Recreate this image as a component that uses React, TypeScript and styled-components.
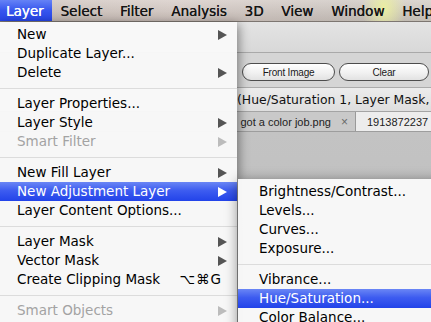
import React from "react";
import styled, { createGlobalStyle, css } from "styled-components";

type Entry =
  | { kind: "sep" }
  | { kind: "item"; label: string; sub?: boolean; disabled?: boolean; active?: boolean; keys?: string };

const layerMenu: Entry[] = [
  { kind: "item", label: "New", sub: true },
  { kind: "item", label: "Duplicate Layer..." },
  { kind: "item", label: "Delete", sub: true },
  { kind: "sep" },
  { kind: "item", label: "Layer Properties..." },
  { kind: "item", label: "Layer Style", sub: true },
  { kind: "item", label: "Smart Filter", sub: true, disabled: true },
  { kind: "sep" },
  { kind: "item", label: "New Fill Layer", sub: true },
  { kind: "item", label: "New Adjustment Layer", sub: true, active: true },
  { kind: "item", label: "Layer Content Options..." },
  { kind: "sep" },
  { kind: "item", label: "Layer Mask", sub: true },
  { kind: "item", label: "Vector Mask", sub: true },
  { kind: "item", label: "Create Clipping Mask", keys: "⌥⌘G" },
  { kind: "sep" },
  { kind: "item", label: "Smart Objects", sub: true, disabled: true },
];

const adjustMenu: Entry[] = [
  { kind: "item", label: "Brightness/Contrast..." },
  { kind: "item", label: "Levels..." },
  { kind: "item", label: "Curves..." },
  { kind: "item", label: "Exposure..." },
  { kind: "sep" },
  { kind: "item", label: "Vibrance..." },
  { kind: "item", label: "Hue/Saturation...", active: true },
  { kind: "item", label: "Color Balance..." },
];

const barTitles = ["Layer", "Select", "Filter", "Analysis", "3D", "View", "Window", "Help"];

const GlobalStyle = createGlobalStyle`
  html, body {
    margin: 0;
    padding: 0;
    overflow: hidden;
    background: #c0c0c0;
  }
  body {
    font-family: "DejaVu Sans", "Noto Sans", sans-serif;
  }
`;

const Screen = styled.div`
  width: 431px;
  height: 322px;
  display: flex;
  flex-direction: column;
  overflow: hidden;
`;

const MenuBar = styled.div`
  flex: none;
  height: 21px;
  display: flex;
  white-space: nowrap;
  border-bottom: 1px solid #7d7671;
  background:
    radial-gradient(ellipse 22px 30px at 384px 8px, rgba(236, 240, 160, 0.95), rgba(236, 240, 160, 0) 100%),
    linear-gradient(180deg, rgba(255, 255, 255, 0.28), rgba(0, 0, 0, 0.06)),
    linear-gradient(90deg, #c7bbb3 0%, #d2c6c0 40%, #cdc3bd 62%, #c9c1bb 80%, #cfc9bf 100%);
`;

const BarTitle = styled.div<{ $open?: boolean }>`
  padding: 1px 8.9px 0;
  line-height: 20px;
  font-size: 13.5px;
  color: #151515;
  text-shadow: 0.25px 0 0 currentColor;

  &:first-child {
    padding-left: 6px;
    padding-right: 8px;
  }

  ${(p) =>
    p.$open &&
    css`
      color: #fff;
      background: linear-gradient(180deg, #6582f6 0%, #3656ee 50%, #2645e8 100%);
    `}
`;

const Workspace = styled.div`
  position: relative;
  flex: 1;
  display: flex;
  flex-direction: column;
  background: #bfbfbf;
`;

const TopStrip = styled.div`
  height: 30px;
  background: linear-gradient(180deg, #e4e4e4, #d8d8d8);
  border-bottom: 1px solid #a9a9a9;
`;

const ButtonBar = styled.div`
  height: 35px;
  display: flex;
  align-items: flex-start;
  gap: 4px;
  padding: 10px 0 0 242px;
  box-sizing: border-box;
  background: #d5d5d5;
  border-bottom: 1px solid #ababab;
`;

const PillButton = styled.button<{ $w: number }>`
  width: ${(p) => p.$w}px;
  height: 18px;
  flex: none;
  padding: 0;
  border: 1px solid #4d4d4d;
  border-radius: 9px;
  background: linear-gradient(180deg, #ffffff 0%, #f1f1f1 55%, #e2e2e2 100%);
  font-family: "Liberation Sans", Arial, sans-serif;
  font-size: 10px;
  letter-spacing: -0.2px;
  color: #1a1a1a;
`;

const TitleRow = styled.div`
  height: 23px;
  padding-left: 237px;
  line-height: 24px;
  font-size: 12.4px;
  white-space: nowrap;
  overflow: hidden;
  color: #111;
  background: linear-gradient(180deg, #ececec, #dedede);
  border-bottom: 1px solid #a4a4a4;
`;

const TabRow = styled.div`
  height: 19px;
  display: flex;
  font-family: "Liberation Sans", Arial, sans-serif;
  font-size: 11px;
  white-space: nowrap;
  border-bottom: 1px solid #9d9d9d;
`;

const Tab = styled.div<{ $current?: boolean }>`
  display: flex;
  align-items: center;
  gap: 10px;
  box-sizing: border-box;
  color: #222;
  ${(p) =>
    p.$current
      ? css`
          flex: 1;
          min-width: 0;
          overflow: hidden;
          padding-left: 11px;
          background: #ededed;
        `
      : css`
          flex: none;
          width: 356px;
          justify-content: flex-end;
          padding-right: 7px;
          background: #c9c9c9;
          border-right: 1px solid #9a9a9a;
        `}
`;

const CloseMark = styled.span`
  color: #6a6a6a;
  font-size: 12px;
`;

const Canvas = styled.div`
  flex: 1;
  background: linear-gradient(180deg, #c3c3c3, #bcbcbc);
`;

const MenuPanel = styled.div`
  position: absolute;
  box-sizing: border-box;
  padding: 3px 0 4px;
  background: rgba(248, 248, 248, 0.98);
  font-size: 13.5px;
  color: #000;
  white-space: nowrap;
`;

const LayerMenu = styled(MenuPanel)`
  --inset: 17px;
  left: 0;
  top: 0;
  width: 237px;
  height: 320px;
  box-shadow: 2px 2px 10px rgba(0, 0, 0, 0.42);
`;

const AdjustMenu = styled(MenuPanel)`
  --inset: 21px;
  left: 238px;
  top: 157px;
  width: 215px;
  height: 170px;
  box-shadow: 0 2px 12px rgba(0, 0, 0, 0.45);
`;

const Row = styled.div<{ $disabled?: boolean; $active?: boolean }>`
  height: 19px;
  display: flex;
  align-items: center;
  padding-left: var(--inset);
  line-height: 19px;
  color: ${(p) => (p.$disabled ? "#a3a3a3" : "#000")};
  ${(p) =>
    p.$active &&
    css`
      color: #fff;
      background: linear-gradient(180deg, #6a86f5 0%, #3d5cf0 45%, #2243e9 100%);
    `}
`;

const Rule = styled.div`
  height: 1px;
  margin: 6px 0 5px;
  background: #dcdcdc;
`;

const Keys = styled.span`
  margin-left: auto;
  padding-right: 15px;
  letter-spacing: 1px;
`;

const Arrow = styled.svg<{ $tone: string }>`
  margin-left: auto;
  margin-right: 10px;
  flex: none;
  fill: ${(p) => p.$tone};
`;

function MenuRows({ entries }: { entries: Entry[] }) {
  return (
    <>
      {entries.map((e, i) => {
        if (e.kind === "sep") return <Rule key={i} />;
        const tone = e.active ? "#ffffff" : e.disabled ? "#bcbcbc" : "#555555";
        return (
          <Row key={i} $disabled={e.disabled} $active={e.active}>
            {e.label}
            {e.keys && <Keys>{e.keys}</Keys>}
            {e.sub && (
              <Arrow $tone={tone} width="9" height="10" viewBox="0 0 9 10">
                <polygon points="0,0 9,5 0,10" />
              </Arrow>
            )}
          </Row>
        );
      })}
    </>
  );
}

export default function App() {
  return (
    <Screen>
      <GlobalStyle />
      <MenuBar>
        {barTitles.map((t, i) => (
          <BarTitle key={t} $open={i === 0}>
            {t}
          </BarTitle>
        ))}
      </MenuBar>
      <Workspace>
        <TopStrip />
        <ButtonBar>
          <PillButton $w={93}>Front Image</PillButton>
          <PillButton $w={90}>Clear</PillButton>
        </ButtonBar>
        <TitleRow>(Hue/Saturation 1, Layer Mask,</TitleRow>
        <TabRow>
          <Tab>
            got a color job.png
            <CloseMark>×</CloseMark>
          </Tab>
          <Tab $current>1913872237</Tab>
        </TabRow>
        <Canvas />
        <LayerMenu>
          <MenuRows entries={layerMenu} />
        </LayerMenu>
        <AdjustMenu>
          <MenuRows entries={adjustMenu} />
        </AdjustMenu>
      </Workspace>
    </Screen>
  );
}
